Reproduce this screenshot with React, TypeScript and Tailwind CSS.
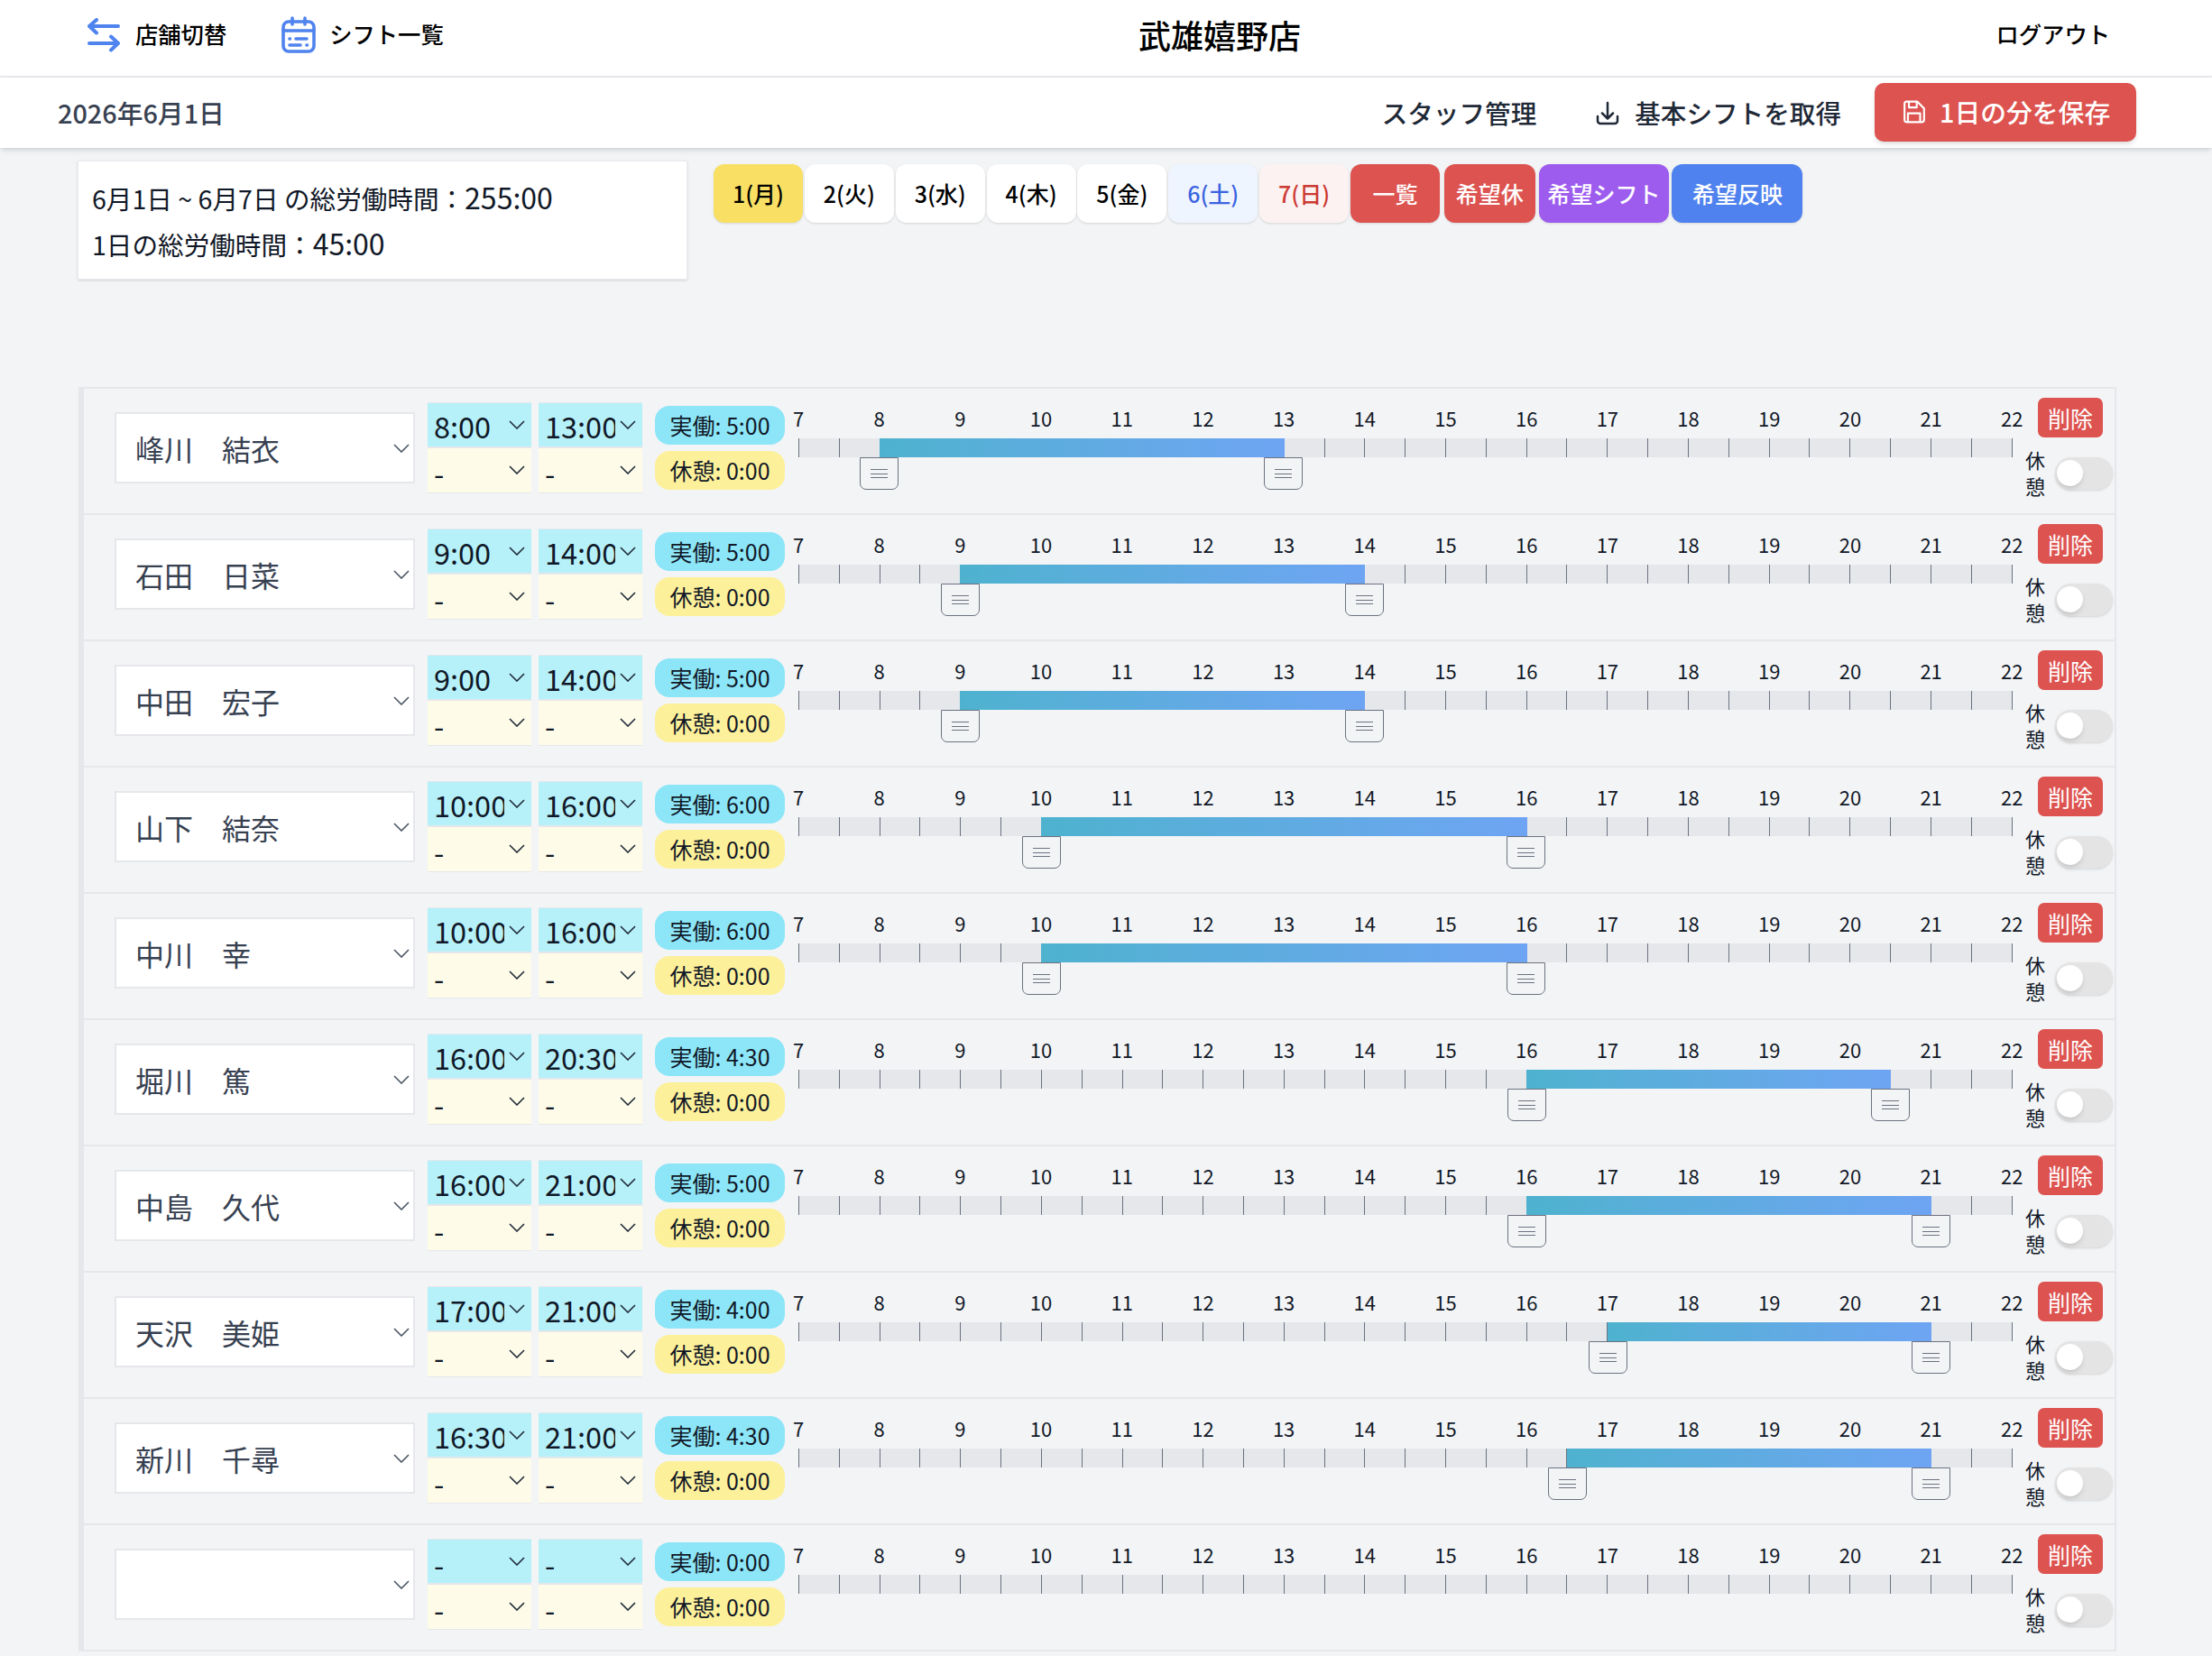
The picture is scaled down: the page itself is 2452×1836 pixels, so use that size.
import React from "react";

type Shift = {
  name: string;
  start: string;
  end: string;
  work: string;
  from?: number;
  to?: number;
};

const shifts: Shift[] = [
  { name: "峰川　結衣", start: "8:00", end: "13:00", work: "5:00", from: 8, to: 13 },
  { name: "石田　日菜", start: "9:00", end: "14:00", work: "5:00", from: 9, to: 14 },
  { name: "中田　宏子", start: "9:00", end: "14:00", work: "5:00", from: 9, to: 14 },
  { name: "山下　結奈", start: "10:00", end: "16:00", work: "6:00", from: 10, to: 16 },
  { name: "中川　幸", start: "10:00", end: "16:00", work: "6:00", from: 10, to: 16 },
  { name: "堀川　篤", start: "16:00", end: "20:30", work: "4:30", from: 16, to: 20.5 },
  { name: "中島　久代", start: "16:00", end: "21:00", work: "5:00", from: 16, to: 21 },
  { name: "天沢　美姫", start: "17:00", end: "21:00", work: "4:00", from: 17, to: 21 },
  { name: "新川　千尋", start: "16:30", end: "21:00", work: "4:30", from: 16.5, to: 21 },
  { name: "", start: "-", end: "-", work: "0:00" },
];

const hours = [7, 8, 9, 10, 11, 12, 13, 14, 15, 16, 17, 18, 19, 20, 21, 22];
const HOUR_W = 89.7;

const days = [
  { label: "1(月)", cls: "bg-[#f9e064] text-black" },
  { label: "2(火)", cls: "bg-white text-black" },
  { label: "3(水)", cls: "bg-white text-black" },
  { label: "4(木)", cls: "bg-white text-black" },
  { label: "5(金)", cls: "bg-white text-black" },
  { label: "6(土)", cls: "bg-[#eff5fe] text-[#3a63e0]" },
  { label: "7(日)", cls: "bg-[#fdf2f2] text-[#cb3a33]" },
  { label: "一覧", cls: "bg-[#dd5350] text-white" },
];

function Chevron({ color = "#1f2937" }: { color?: string }) {
  return (
    <svg width="18" height="10" viewBox="0 0 18 10" fill="none" className="shrink-0">
      <polyline points="1,1 9,9 17,1" stroke={color} strokeWidth="1.6" />
    </svg>
  );
}

function TimeSelect({ value, bg }: { value: string; bg: string }) {
  return (
    <div className={`w-[115px] h-[50.5px] pl-[7px] flex items-center border-y-[1.5px] border-[#e5e7eb] ${bg}`}>
      <span
        className={`w-[78px] overflow-x-clip whitespace-nowrap text-[32.5px] leading-[47px] text-[#111827] ${
          value === "-" ? "mt-[5px]" : "mt-[1px]"
        }`}
      >
        {value}
      </span>
      <span className="ml-[5px] flex">
        <Chevron />
      </span>
    </div>
  );
}

function Handle({ hour, shift = 0 }: { hour: number; shift?: number }) {
  const left = (hour - 7) * HOUR_W - 21.5 + shift;
  return (
    <div
      className="absolute top-[21px] w-[43px] h-[36px] border-[1.5px] border-[#6b7280] rounded-b-[7px] bg-[#f3f4f6] flex flex-col items-center justify-center gap-[3.5px]"
      style={{ left }}
    >
      <div className="w-[19px] h-[1px] bg-[#6b7280]" />
      <div className="w-[19px] h-[1px] bg-[#6b7280]" />
      <div className="w-[19px] h-[1px] bg-[#6b7280]" />
    </div>
  );
}

function Timeline({ from, to }: { from?: number; to?: number }) {
  return (
    <div className="ml-[15px] w-[1345.5px] self-start pt-[17px]">
      <div className="flex -ml-[44.85px] h-[30px] items-center">
        {hours.map((h) => (
          <div key={h} className="w-[89.7px] shrink-0 text-center text-[22px] leading-none text-[#111827]">
            {h}
          </div>
        ))}
      </div>
      <div className="relative mt-[8px] h-[21px] flex bg-[#e5e7eb] border-r-[1.5px] border-[#6b7280]">
        {Array.from({ length: 30 }).map((_, i) => (
          <div key={i} className="flex-1 border-l-[1.5px] border-[#6b7280]" />
        ))}
        {from !== undefined && to !== undefined && (
          <>
            <div
              className="absolute inset-y-0 bg-gradient-to-r from-[#4eb2cf] to-[#6ea4f3]"
              style={{ left: (from - 7) * HOUR_W, width: (to - from) * HOUR_W + 0.5 }}
            />
            <Handle hour={from} />
            <Handle hour={to} shift={-0.5} />
          </>
        )}
      </div>
    </div>
  );
}

function Row({ shift }: { shift: Shift }) {
  return (
    <div className="h-[140px] border-b-2 border-[#e5e7eb] flex items-center pb-[8px] pl-[34px]">
      <div className="w-[333px] h-[79px] mt-[1px] bg-white border-2 border-[#e5e7eb] flex items-center justify-between pl-[21px] pr-[4px]">
        <span className="text-[32px] leading-none pt-[1px] text-[#374151]">{shift.name}</span>
        <Chevron color="#4b5563" />
      </div>
      <div className="ml-[14px] flex flex-col">
        <TimeSelect value={shift.start} bg="bg-[#b6f1fa]" />
        <TimeSelect value="-" bg="bg-[#fefce8]" />
      </div>
      <div className="ml-[8px] flex flex-col">
        <TimeSelect value={shift.end} bg="bg-[#b6f1fa]" />
        <TimeSelect value="-" bg="bg-[#fefce8]" />
      </div>
      <div className="ml-[14px] flex flex-col gap-[7px]">
        <div className="w-[144px] h-[43px] rounded-[16px] bg-[#8ce6f8] flex items-center justify-center text-[25px] leading-none text-[#111827]">
          実働: {shift.work}
        </div>
        <div className="w-[144px] h-[43px] rounded-[16px] bg-[#fdf09a] flex items-center justify-center text-[25px] leading-none text-[#111827]">
          休憩: 0:00
        </div>
      </div>
      <Timeline from={shift.from} to={shift.to} />
      <div className="ml-[14.5px] w-[97px] self-start pt-[10px] flex flex-col items-end">
        <div className="mr-[11px] w-[72px] h-[44px] rounded-[7px] bg-[#dd5350] text-white text-[25px] leading-none flex items-center justify-center">
          削除
        </div>
        <div className="mt-[9.5px] w-full flex items-center justify-between">
          <div className="w-[22px] mb-[2px] text-[22px] leading-[29px] text-[#111827] break-all">休憩</div>
          <div className="w-[64px] h-[36px] rounded-full bg-[#e4e4e4] flex items-center pl-[2px] shadow-sm">
            <div className="w-[29px] h-[29px] rounded-full bg-white shadow-md" />
          </div>
        </div>
      </div>
    </div>
  );
}

export default function App() {
  return (
    <div className="min-h-screen bg-[#f3f4f6] font-['Noto_Sans_CJK_JP','Noto_Sans',sans-serif]">
      <div className="h-[86px] bg-white border-b-2 border-[#e5e7eb] flex items-center justify-between pl-[97px] pr-[113px] pb-[8px] text-black">
        <div className="flex items-center">
          <svg width="36" height="38" viewBox="0 0 36 38" fill="none" stroke="#4f83ee" strokeWidth="4" strokeLinecap="round" strokeLinejoin="round" className="mt-[2px]">
            <path d="M2 9h32M10 2 2 9l8 7.5" />
            <path d="M2 28h32M26 20.5l8 7.500-8 7.500" />
          </svg>
          <span className="ml-[17px] text-[25.3px] font-medium leading-none">店舗切替</span>
          <svg width="38" height="41" viewBox="0 0 38 41" fill="none" stroke="#4f83ee" strokeWidth="3.600" strokeLinecap="round" className="ml-[61px]">
            <rect x="2" y="6" width="34" height="33" rx="6" />
            <path d="M2 16h34M12 2v7M26 2v7" />
            <path d="M9 25h.5M16 25h12M9 32h12M28 32h.5" />
          </svg>
          <span className="ml-[15px] text-[25.3px] font-medium leading-none">シフト一覧</span>
        </div>
        <h1 className="text-[36px] font-medium leading-none">武雄嬉野店</h1>
        <span className="text-[25.3px] font-medium leading-none">ログアウト</span>
      </div>

      <div className="relative h-[78px] bg-white shadow-md flex items-center justify-between pl-[64px] pr-[84px]">
        <span className="text-[28.800px] font-medium leading-none text-[#374151]">2026年6月1日</span>
        <div className="flex items-center">
          <span className="text-[28.600px] font-medium leading-none text-[#1f2937]">スタッフ管理</span>
          <svg width="26" height="27" viewBox="0 0 26 27" fill="none" stroke="#1f2937" strokeWidth="2.500" strokeLinecap="round" strokeLinejoin="round" className="ml-[66px]">
            <path d="M13 2v17M7 13.500l6 6 6-6" />
            <path d="M2 17v5a3 3 0 0 0 3 3h16a3 3 0 0 0 3-3v-5" />
          </svg>
          <span className="ml-[17px] text-[28.600px] font-medium leading-none text-[#1f2937]">基本シフトを取得</span>
          <div className="ml-[37px] w-[290px] h-[65px] mt-[-2px] rounded-[10px] bg-[#dd5350] shadow-md text-white flex items-center pl-[31px]">
            <svg width="26" height="26" viewBox="0 0 24 24" fill="none" stroke="currentColor" strokeWidth="2" strokeLinecap="round" strokeLinejoin="round">
              <path d="M4 1.500h11l7 7V20a2.500 2.500 0 0 1-2.500 2.500h-15A2.500 2.500 0 0 1 2 20V3.500a2 2 0 0 1 2-2Z" />
              <path d="M6.500 2v5.500h8V2" />
              <path d="M5.500 22v-8.500h12.500V22" />
            </svg>
            <span className="ml-[15px] text-[28.800px] font-medium leading-none">1日の分を保存</span>
          </div>
        </div>
      </div>

      <div className="flex items-start pl-[86px] pt-[14px]">
        <div className="w-[676px] h-[132px] bg-white border border-[#e9eaee] shadow-sm pl-[15px] pt-[1px] text-[28.6px] leading-[50px] text-[#111827] flex flex-col justify-center">
          <div className="mb-[-1.5px]">
            6月1日 ~ 6月7日 の総労働時間：<span className="text-[32px]">255:00</span>
          </div>
          <div>
            1日の総労働時間：<span className="text-[32px]">45:00</span>
          </div>
        </div>
        <div className="ml-[29px] mt-[4px] flex items-start gap-[1.850px] text-[25px] font-medium leading-none">
          {days.map((d) => (
            <div key={d.label} className={`w-[99px] h-[65px] rounded-[12px] shadow-sm flex items-center justify-center ${d.cls}`}>
              {d.label}
            </div>
          ))}
          <div className="ml-[3px] w-[101px] h-[65px] rounded-[12px] shadow-sm bg-[#dd5350] text-white flex items-center justify-center">
            希望休
          </div>
          <div className="ml-[2.500px] w-[144px] h-[65px] rounded-[12px] shadow-sm bg-[#9d5cee] text-white flex items-center justify-center">
            希望シフト
          </div>
          <div className="ml-[1.500px] w-[145px] h-[65px] rounded-[12px] shadow-sm bg-[#4f82ee] text-white flex items-center justify-center">
            希望反映
          </div>
        </div>
      </div>

      <div className="ml-[87px] mt-[119px] w-[2259px] border-t-2 border-r-2 border-l-[6px] border-[#e5e7eb]">
        {shifts.map((s, i) => (
          <Row key={i} shift={s} />
        ))}
      </div>
    </div>
  );
}
